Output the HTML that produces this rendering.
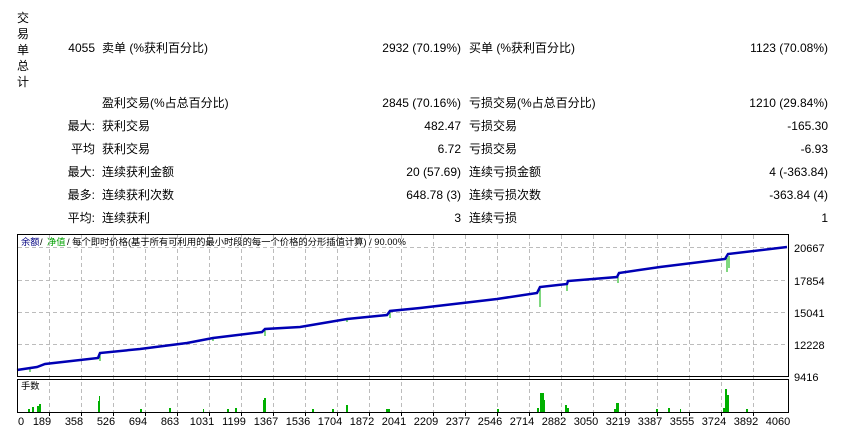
<!DOCTYPE html>
<html><head><meta charset="utf-8"><style>
body{margin:0;width:845px;height:432px;background:#fff;overflow:hidden;position:relative;font-family:"Liberation Sans","Noto Sans CJK SC",sans-serif;font-size:12px;color:#000}
.t{position:absolute;white-space:nowrap;line-height:14px}
.r{text-align:right}
</style></head><body>
<div class="t" style="left:17px;top:10px;width:14px;line-height:16px;white-space:normal">交<br>易<br>单<br>总<br>计</div>

<div class="t r" style="right:750px;top:41px">4055</div>
<div class="t" style="left:102px;top:41px">卖单 (%获利百分比)</div>
<div class="t r" style="right:384px;top:41px">2932 (70.19%)</div>
<div class="t" style="left:469px;top:41px">买单 (%获利百分比)</div>
<div class="t r" style="right:17px;top:41px">1123 (70.08%)</div>

<div class="t" style="left:102px;top:96px">盈利交易(%占总百分比)</div>
<div class="t r" style="right:384px;top:96px">2845 (70.16%)</div>
<div class="t" style="left:469px;top:96px">亏损交易(%占总百分比)</div>
<div class="t r" style="right:17px;top:96px">1210 (29.84%)</div>

<div class="t r" style="right:750px;top:119px">最大:</div>
<div class="t" style="left:102px;top:119px">获利交易</div>
<div class="t r" style="right:384px;top:119px">482.47</div>
<div class="t" style="left:469px;top:119px">亏损交易</div>
<div class="t r" style="right:17px;top:119px">-165.30</div>

<div class="t r" style="right:750px;top:142px">平均</div>
<div class="t" style="left:102px;top:142px">获利交易</div>
<div class="t r" style="right:384px;top:142px">6.72</div>
<div class="t" style="left:469px;top:142px">亏损交易</div>
<div class="t r" style="right:17px;top:142px">-6.93</div>

<div class="t r" style="right:750px;top:165px">最大:</div>
<div class="t" style="left:102px;top:165px">连续获利金额</div>
<div class="t r" style="right:384px;top:165px">20 (57.69)</div>
<div class="t" style="left:469px;top:165px">连续亏损金额</div>
<div class="t r" style="right:17px;top:165px">4 (-363.84)</div>

<div class="t r" style="right:750px;top:188px">最多:</div>
<div class="t" style="left:102px;top:188px">连续获利次数</div>
<div class="t r" style="right:384px;top:188px">648.78 (3)</div>
<div class="t" style="left:469px;top:188px">连续亏损次数</div>
<div class="t r" style="right:17px;top:188px">-363.84 (4)</div>

<div class="t r" style="right:750px;top:211px">平均:</div>
<div class="t" style="left:102px;top:211px">连续获利</div>
<div class="t r" style="right:384px;top:211px">3</div>
<div class="t" style="left:469px;top:211px">连续亏损</div>
<div class="t r" style="right:17px;top:211px">1</div>

<svg style="position:absolute;left:0;top:0" width="845" height="432" xmlns="http://www.w3.org/2000/svg">
<g stroke="#bcbcbc" stroke-dasharray="4,3" stroke-width="1">
<path d="M49.5 235V413M81.5 235V413M113.5 235V413M145.5 235V413M177.5 235V413M209.5 235V413M241.5 235V413M273.5 235V413M305.5 235V413M337.5 235V413M369.5 235V413M401.5 235V413M433.5 235V413M465.5 235V413M497.5 235V413M529.5 235V413M561.5 235V413M593.5 235V413M625.5 235V413M657.5 235V413M689.5 235V413M721.5 235V413M753.5 235V413"/>
<path d="M18 247.5H788M18 280.5H788M18 312.5H788M18 344.5H788"/>
</g>
<g fill="none" stroke="#00b000" stroke-width="1">
<path d="M100 353V361M265 329V336M390 311V318M540 287V307M567 281V291M618 273V283M727 254V272M540 287V302M729 256V268M30 368V372M213 338V341M347 319V322M437 305V307"/>
</g>
<polyline fill="none" stroke="#0000b4" stroke-width="2.5" points="17,370 37,367 45,364 98,358 100,353 140,349 187,343 213,338 262,332 265,329 300,327 347,319 387,315 390,311 420,308 497,299 537,293 540,287 567,284 568,281 617,277 619,273 660,267 725,259 728,254 787,247"/>
<g fill="none" stroke="#000" stroke-width="1">
<rect x="17.5" y="234.5" width="771" height="142"/>
<rect x="17.5" y="379.5" width="771" height="33"/>
</g>
<g stroke="#000"><path d="M49.5 413V416M81.5 413V416M113.5 413V416M145.5 413V416M177.5 413V416M209.5 413V416M241.5 413V416M273.5 413V416M305.5 413V416M337.5 413V416M369.5 413V416M401.5 413V416M433.5 413V416M465.5 413V416M497.5 413V416M529.5 413V416M561.5 413V416M593.5 413V416M625.5 413V416M657.5 413V416M689.5 413V416M721.5 413V416M753.5 413V416M788.5 248V251M788.5 281V284M788.5 313V316M788.5 345V348"/></g>
<g fill="#00b000">
<rect x="28" y="409" width="2" height="3"/><rect x="32" y="407" width="2" height="5"/><rect x="37" y="406" width="2" height="6"/><rect x="39" y="404" width="2" height="8"/>
<rect x="98" y="401" width="2" height="11"/><rect x="99" y="396" width="1" height="16"/>
<rect x="140" y="409" width="2" height="3"/><rect x="169" y="408" width="2" height="4"/><rect x="203" y="409" width="1" height="3"/><rect x="227" y="409" width="2" height="3"/><rect x="235" y="408" width="2" height="4"/>
<rect x="263" y="400" width="3" height="12"/><rect x="264" y="398" width="2" height="14"/>
<rect x="312" y="409" width="2" height="3"/><rect x="332" y="409" width="2" height="3"/><rect x="346" y="405" width="2" height="7"/>
<rect x="386" y="409" width="4" height="3"/>
<rect x="540" y="393" width="4" height="19"/><rect x="542" y="400" width="3" height="12"/><rect x="537" y="408" width="2" height="4"/>
<rect x="565" y="405" width="2" height="7"/><rect x="567" y="408" width="2" height="4"/>
<rect x="616" y="403" width="3" height="9"/><rect x="725" y="389" width="2" height="23"/><rect x="727" y="395" width="2" height="17"/><rect x="723" y="408" width="2" height="4"/>
<rect x="497" y="409" width="2" height="3"/><rect x="656" y="409" width="2" height="3"/><rect x="668" y="408" width="2" height="4"/><rect x="680" y="409" width="1" height="3"/><rect x="746" y="409" width="2" height="3"/><rect x="614" y="409" width="2" height="3"/>
</g>
<g font-family="Liberation Sans, Noto Sans CJK SC, sans-serif" font-size="9.3">
<text x="21" y="245" fill="#000080">余额</text><text x="40" y="245" fill="#000">/</text><text x="47" y="245" fill="#00a000">净值</text><text x="67" y="245" fill="#000">/ 每个即时价格(基于所有可利用的最小时段的每一个价格的分形插值计算) / 90.00%</text>
<text x="21" y="389" fill="#000">手数</text>
</g>
<g font-family="Liberation Sans, sans-serif" font-size="11" fill="#000">
<text x="794" y="252">20667</text><text x="794" y="285">17854</text><text x="794" y="317">15041</text><text x="794" y="349">12228</text><text x="794" y="381">9416</text>
</g>
<g font-family="Liberation Sans, sans-serif" font-size="11" fill="#000" text-anchor="middle">
<text x="21" y="425">0</text><text x="42" y="425">189</text><text x="74" y="425">358</text><text x="106" y="425">526</text><text x="138" y="425">694</text><text x="170" y="425">863</text><text x="202" y="425">1031</text><text x="234" y="425">1199</text><text x="266" y="425">1367</text><text x="298" y="425">1536</text><text x="330" y="425">1704</text><text x="362" y="425">1872</text><text x="394" y="425">2041</text><text x="426" y="425">2209</text><text x="458" y="425">2377</text><text x="490" y="425">2546</text><text x="522" y="425">2714</text><text x="554" y="425">2882</text><text x="586" y="425">3050</text><text x="618" y="425">3219</text><text x="650" y="425">3387</text><text x="682" y="425">3555</text><text x="714" y="425">3724</text><text x="746" y="425">3892</text><text x="778" y="425">4060</text>
</g>
</svg>
</body></html>
